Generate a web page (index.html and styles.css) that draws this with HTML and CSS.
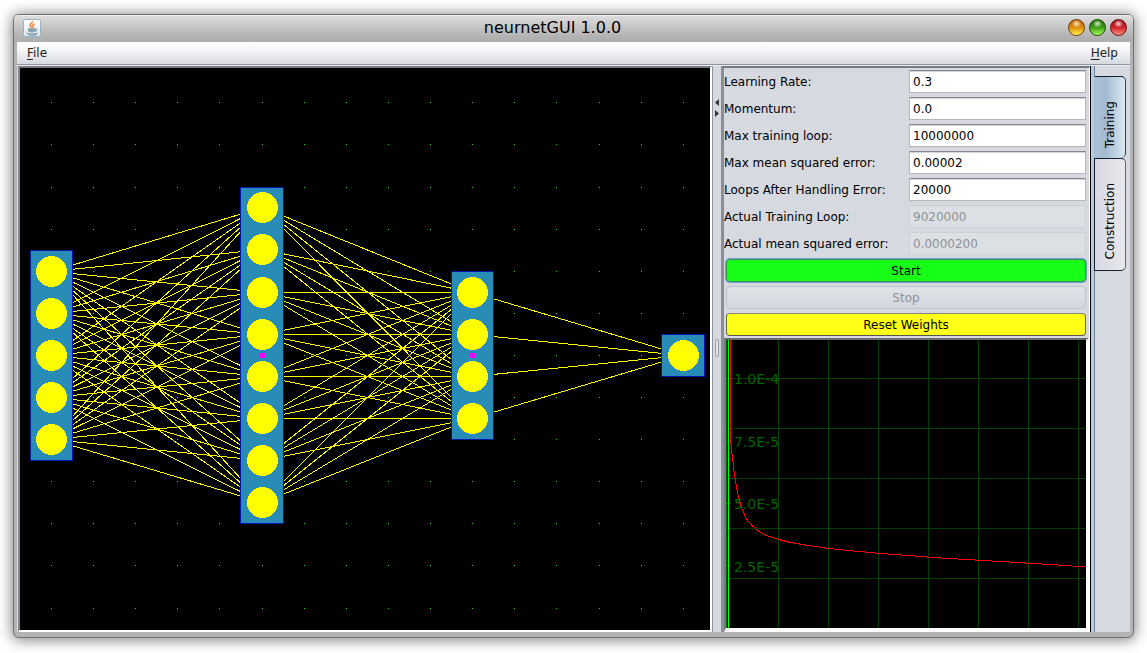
FILE: index.html
```html
<!DOCTYPE html>
<html lang="en">
<head>
<meta charset="utf-8">
<title>neurnetGUI 1.0.0</title>
<link rel="stylesheet" href="styles.css">
</head>
<body>
<div class="window">
  <header class="titlebar">
    <svg class="app-icon" viewBox="0 0 18 18" aria-hidden="true">
      <defs><linearGradient id="tile" x2="0" y2="1"><stop stop-color="#fff"/><stop offset="1" stop-color="#dce5ea"/></linearGradient></defs>
      <rect x=".5" y=".5" width="17" height="17" rx="1.5" fill="url(#tile)" stroke="#9fb1bf"/>
      <path d="M9.500 2.200c1 1.600-3 2.700-2.500 4.300.2.900 1.200 1.500 1.700 2.500M11.700 5c-2.400.8-2.800 1.700-1.800 2.700.5.6.1 1.200-.4 1.500" fill="none" stroke="#ef8b45" stroke-width="1.500"/>
      <path d="M5 10h7.500v1.500a2.500 2.500 0 0 1-2.500 2h-2.500a2.500 2.500 0 0 1-2.500-2z" fill="#8ba4b6"/>
      <path d="M5 10h7.500M12.500 10c2-.5 2 1.900-.4 2.400M3.500 14.300c2 1.200 8 1.200 11 0M5.500 15.700c3 .6 6 .4 8-.2" fill="none" stroke="#64879f" stroke-width="1"/>
    </svg>
    <h1 class="title">neurnetGUI 1.0.0</h1>
    <div class="window-controls">
      <button class="orb orb-amber" aria-label="Minimize"></button>
      <button class="orb orb-green" aria-label="Maximize"></button>
      <button class="orb orb-red" aria-label="Close"></button>
    </div>
  </header>
  <nav class="menubar">
    <button class="menu"><u>F</u>ile</button>
    <button class="menu"><u>H</u>elp</button>
  </nav>
  <main class="workspace">
    <section class="network" aria-label="Network">
      <svg id="network" class="network-view" viewBox="20 68 690 562"></svg>
    </section>
    <div class="divider" role="separator">
      <svg class="arrows" viewBox="0 0 5 18" aria-hidden="true"><path d="M4 0v7L0 3.500zM0 11v7l4-3.500z" fill="#33363c"/></svg>
      <span class="grip"></span>
    </div>
    <section class="side">
      <form class="settings">
        <label for="rate">Learning Rate:</label><input id="rate" value="0.3">
        <label for="momentum">Momentum:</label><input id="momentum" value="0.0">
        <label for="max-loop">Max training loop:</label><input id="max-loop" value="10000000">
        <label for="max-error">Max mean squared error:</label><input id="max-error" value="0.00002">
        <label for="after">Loops After Handling Error:</label><input id="after" value="20000">
        <label for="loop">Actual Training Loop:</label><input id="loop" value="9020000" disabled>
        <label for="error">Actual mean squared error:</label><input id="error" value="0.0000200" disabled>
        <button type="button" class="action start">Start</button>
        <button type="button" class="action stop" disabled>Stop</button>
        <button type="button" class="action reset">Reset Weights</button>
      </form>
      <div class="chart">
        <svg class="chart-view" viewBox="726 340 360 288" preserveAspectRatio="xMinYMin slice" role="img" aria-label="Mean squared error">
          <path class="grid-line" d="M778.500 340v288M828.500 340v288M878.500 340v288M928.500 340v288M978.500 340v288M1028.500 340v288M1078.500 340v288M726 378.500h360M726 428.500h360M726 478.500h360M726 528.500h360M726 578.500h360"/>
          <path class="tick" d="M726.500 340v288M727 378.500h4M727 441.500h4M727 503.500h4M727 565.500h4"/>
          <g class="tick-label">
            <text x="734" y="384">1.0E-4</text>
            <text x="734" y="447">7.5E-5</text>
            <text x="734" y="509">5.0E-5</text>
            <text x="734" y="572">2.5E-5</text>
          </g>
          <path class="axis" d="M728.500 340v288"/>
          <path class="curve" d="M730.500 340V441L732.500 458L734.500 475L737.500 493L741.500 508L746.500 519L752.500 526L758.500 531L766.500 535.500L778.500 539.500L790.500 542.500L808.500 545.500L828.500 548.500L848.500 550.500L880.500 553.500L908.500 555.500L932.500 557.500L1000.500 561.500L1033.500 563.500L1065.500 565.500L1086 567"/>
        </svg>
      </div>
    </section>
    <div class="tabs" role="tablist">
      <button class="tab tab-selected" role="tab" aria-selected="true"><span class="tab-text">Training</span></button>
      <button class="tab" role="tab" aria-selected="false"><span class="tab-text">Construction</span></button>
    </div>
  </main>
</div>
<script src="network.js"></script>
</body>
</html>
```

FILE: styles.css
```css
* { box-sizing: border-box; }
body {
  margin: 0;
  min-height: 100vh;
  padding: 14px 13px 15px;
  display: flex;
  background: #fff;
  color: #000;
  font: 12px/16px "DejaVu Sans", sans-serif;
}
button, input { font: inherit; color: inherit; margin: 0; }
.window {
  flex: 1;
  display: flex;
  flex-direction: column;
  padding: 0 3px 5px;
  border: 1px solid #707070;
  border-radius: 6px;
  background: #b4b4b4;
  box-shadow: 0 1px 14px 1px rgba(0, 0, 0, .5);
}
.titlebar {
  display: grid;
  grid-template-columns: 62px 1fr 62px;
  align-items: center;
  height: 27px;
  margin: 0 -3px;
  padding: 0 3px 2px 9px;
  border-radius: 5px 5px 0 0;
  background: linear-gradient(#dedede, #b0b0b0 85%);
  box-shadow: inset 0 1px #eee;
}
.app-icon { width: 18px; height: 18px; }
.title {
  margin: 0;
  padding-right: 48px;
  text-align: center;
  font-size: 16px;
  line-height: 20px;
  font-weight: 400;
}
.window-controls { display: flex; gap: 4px; }
.orb {
  width: 17px;
  height: 17px;
  padding: 0;
  border: 1px solid;
  border-radius: 50%;
}
.orb-amber { border-color: #6e3a08; background: radial-gradient(ellipse 5px 4px at 50% 25%, #ffe9c8, transparent), linear-gradient(#c06a08 20%, #dc9206 50%, #fff04a); }
.orb-green { border-color: #184a08; background: radial-gradient(ellipse 5px 4px at 50% 25%, #d4edc4, transparent), linear-gradient(#287808 20%, #3d9c14 50%, #a6ff60); }
.orb-red { border-color: #6b0c10; background: radial-gradient(ellipse 5px 4px at 50% 25%, #fcd0d0, transparent), linear-gradient(#a81018 20%, #cc2428 50%, #ff9080); }
.menubar {
  display: flex;
  justify-content: space-between;
  height: 23px;
  padding: 0 12px 0 10px;
  border-bottom: 1px solid #8b92a3;
  background: linear-gradient(#fff, #f3f4f6 40%, #d6d9e0);
}
.menu { padding: 0; border: 0; background: none; color: #222; }
.menu u { text-underline-offset: 2px; }
.workspace {
  flex: 1;
  display: grid;
  grid-template-columns: minmax(0, 1fr) 9px 369px 40px;
  border-top: 1px solid #eceef2;
  background: #d6d9e0;
}
.network {
  display: flex;
  border: solid;
  border-width: 2px 2px 2px 2px;
  border-color: #777a80 #fff #fff #85888f;
  margin-left: 1px;
  background: #000;
}
.network-view { width: 100%; height: 100%; display: block; }
.divider {
  display: flex;
  flex-direction: column;
  align-items: center;
  padding-top: 33px;
  border-left: 1px solid #8b92a0;
}
.arrows { width: 5px; height: 18px; }
.grip {
  width: 4px;
  height: 18px;
  margin-top: 222px;
  border: 1px solid #9a9ea6;
  border-radius: 2px;
  background: #e4e6ea;
}
.side {
  display: flex;
  flex-direction: column;
  border: solid;
  border-width: 2px 1px 0 3px;
  border-color: #777a80 #fff #fff #8b8e96;
}
.settings {
  display: grid;
  grid-template-columns: 185px 1fr;
  grid-auto-rows: 23px;
  row-gap: 4px;
  align-items: center;
  padding: 2px 3px 2px 0;
}
.settings input {
  width: 100%;
  height: 23px;
  padding: 0 3px;
  border: 1px solid #b4b6ba;
  border-top: 1px solid #85878c;
  background: #fff;
  box-shadow: inset 0 1px #d5d6d8;
  outline: 0;
}
.settings input:disabled {
  color: #8e9196;
  border-color: #ccd1d6;
  background: #dce0e4;
  box-shadow: none;
}
.action {
  grid-column: 1 / -1;
  height: 23px;
  margin-left: 2px;
  padding: 0;
  border: 1px solid;
  border-radius: 4px;
}
.start { border-color: #458e58; background: #17ff17; box-shadow: 0 0 0 1px #6f9fd0; }
.stop { border-color: #bec2ca; background: linear-gradient(#dfe2e6, #d3d6de); color: #8e9196; }
.reset { border-color: #88887c #66664a #555; background: #ffff17; }
.chart {
  flex: 1;
  min-height: 0;
  display: flex;
  border: solid;
  border-width: 2px 3px 4px 2px;
  border-color: #696b70 #fff #fff #777a80;
  background: #000;
}
.chart-view { width: 100%; height: 100%; display: block; }
.grid-line, .tick, .axis, .curve { fill: none; shape-rendering: crispEdges; }
.grid-line { stroke: #004000; }
.tick { stroke: #006400; }
.axis { stroke: #00ff00; }
.curve { stroke: #ff0000; }
.tick-label { fill: #006400; font-size: 14px; }
.tabs {
  display: flex;
  flex-direction: column;
  padding: 10px 4px 0 0;
  border-left: 1px solid #000;
  background: linear-gradient(90deg, #b4cde3 3px, #6e8299 3px, #6e8299 4px, transparent 4px);
}
.tab {
  display: flex;
  justify-content: center;
  margin-left: 3px;
  padding: 24px 0 10px;
  border: 1px solid #1b1f2b;
  border-right-color: #606875;
  border-radius: 0 5px 5px 0;
  background: linear-gradient(90deg, #d6d9e2, #e8e9ed);
}
.tab-selected {
  border-left-color: #a4bcd3;
  border-bottom-width: 0;
  border-right-color: #2c4258;
  background: linear-gradient(90deg, #abc2d8, #a3bad1 35%, #dbe8f2);
}
.tab-text { writing-mode: vertical-rl; transform: rotate(180deg); }
.net-dot { fill: #22dd22; }
.net-link { stroke: #ffff00; }
.net-layer { fill: #288cb6; stroke: #0018a8; }
.net-neuron { fill: #ffff00; }
.net-handle { fill: #ff00ff; }
.network-view * { shape-rendering: crispEdges; }
```

FILE: network.js
```js
const svg = document.getElementById("network");

function draw(name, className, attributes) {
  const node = document.createElementNS("http://www.w3.org/2000/svg", name);
  node.setAttribute("class", className);
  for (const key in attributes) node.setAttribute(key, attributes[key]);
  svg.appendChild(node);
}

const rows = [102, 144, 187, 229, 271, 313, 355, 397, 439, 481, 523, 565, 608];
const columns = [51, 93, 135, 177, 219, 262, 304, 346, 388, 430, 472, 514, 556, 599, 641, 683];

const layers = [
  { x: 51, left: 30, right: 72, top: 250, bottom: 460, neurons: [271, 313, 355, 397, 439] },
  { x: 262, left: 240, right: 283, top: 187, bottom: 523, neurons: [207, 249, 292, 334, 376, 418, 460, 502], handle: true },
  { x: 472, left: 451, right: 493, top: 271, bottom: 439, neurons: [292, 334, 376, 418], handle: true },
  { x: 683, left: 661, right: 704, top: 334, bottom: 376, neurons: [355] }
];

for (const y of rows)
  for (const x of columns)
    draw("rect", "net-dot", { x, y, width: 1, height: 1 });

for (let i = 1; i < layers.length; i++)
  for (const from of layers[i - 1].neurons)
    for (const to of layers[i].neurons)
      draw("line", "net-link", { x1: layers[i - 1].x + 0.5, y1: from + 0.5, x2: layers[i].x + 0.5, y2: to + 0.5 });

for (const layer of layers) {
  draw("rect", "net-layer", { x: layer.left + 0.5, y: layer.top + 0.5, width: layer.right - layer.left, height: layer.bottom - layer.top });
  for (const y of layer.neurons)
    draw("circle", "net-neuron", { cx: layer.x + 0.5, cy: y + 0.5, r: 15.5 });
  if (layer.handle)
    draw("rect", "net-handle", { x: layer.x - 2, y: 353, width: 5, height: 5 });
}
```
